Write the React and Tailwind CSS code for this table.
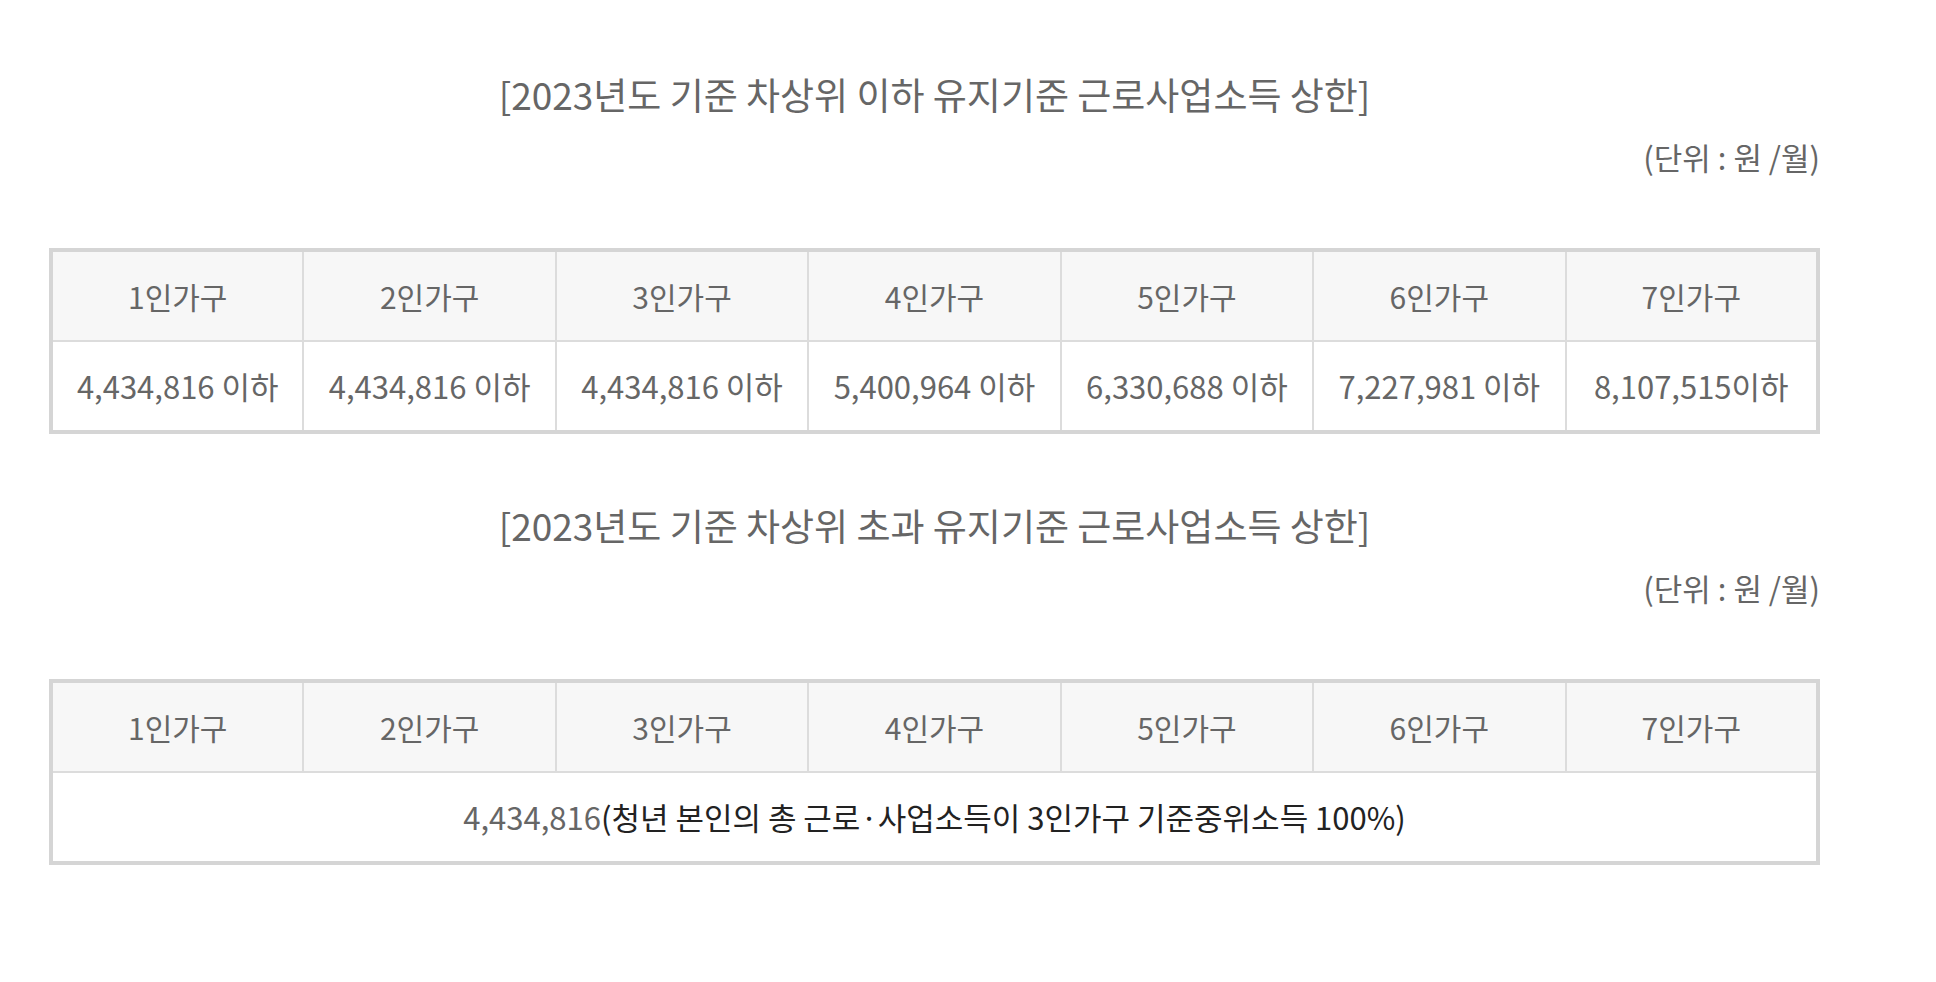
const heads = ["1인가구", "2인가구", "3인가구", "4인가구", "5인가구", "6인가구", "7인가구"];
const values = [
  "4,434,816 이하",
  "4,434,816 이하",
  "4,434,816 이하",
  "5,400,964 이하",
  "6,330,688 이하",
  "7,227,981 이하",
  "8,107,515이하",
];

const font = { fontFamily: '"Noto Sans CJK KR", "Noto Sans", sans-serif' };

function Title({ children }) {
  return (
    <div>
      <h2 className="text-center text-[37px] leading-[44px] text-[#666] font-normal">{children}</h2>
      <p className="mt-[23px] text-right text-[31px] leading-[36px] text-[#666]">(단위 : 원 /월)</p>
    </div>
  );
}

function HeadRow() {
  return (
    <tr className="bg-[#f7f7f7]">
      {heads.map((h, i) => (
        <th
          key={h}
          className={`h-[91px] border-b-2 border-[#dcdcdc] text-[30px] font-normal text-[#666] ${
            i > 0 ? "border-l-2" : ""
          }`}
        >
          {h}
        </th>
      ))}
    </tr>
  );
}

export default function App() {
  return (
    <div className="min-h-screen bg-white" style={font}>
      <div className="ml-[49px] w-[1771px] pt-[72px]">
        <Title>[2023년도 기준 차상위 이하 유지기준 근로사업소득 상한]</Title>

        <table className="mt-[73px] w-full table-fixed border-collapse border-4 border-[#d5d5d5]">
          <tbody>
            <HeadRow />
            <tr>
              {values.map((v, i) => (
                <td
                  key={i}
                  className={`h-[91px] text-center text-[31px] text-[#666] ${
                    i > 0 ? "border-l-2 border-[#dcdcdc]" : ""
                  }`}
                >
                  {v}
                </td>
              ))}
            </tr>
          </tbody>
        </table>

        <div className="mt-[69px]">
          <Title>[2023년도 기준 차상위 초과 유지기준 근로사업소득 상한]</Title>
        </div>

        <table className="mt-[73px] w-full table-fixed border-collapse border-4 border-[#d5d5d5]">
          <tbody>
            <HeadRow />
            <tr>
              <td colSpan={7} className="h-[91px] text-center text-[31px]">
                <span className="text-[#666]">4,434,816</span>
                <span className="text-[#222]">(청년 본인의 총 근로·사업소득이 3인가구 기준중위소득 100%)</span>
              </td>
            </tr>
          </tbody>
        </table>
      </div>
    </div>
  );
}
